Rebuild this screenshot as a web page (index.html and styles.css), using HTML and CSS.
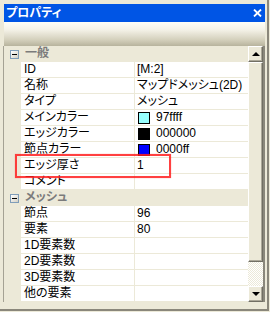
FILE: index.html
```html
<!DOCTYPE html>
<html lang="ja">
<head>
    <meta charset="UTF-8">
    <title>プロパティ</title>
    <link rel="stylesheet" href="styles.css">
</head>
<body>

    <div class="window">
        <div class="titlebar">
            <span class="title">プロパティ</span>
            <svg class="close" width="9" height="8" viewBox="0 0 9 8">
                <path d="M1 0.5 L8 7.5 M8 0.5 L1 7.5" stroke="#fff" stroke-width="1.8" fill="none"/>
            </svg>
        </div>
        <div class="toolbar"></div>

        <div class="panel">
            <div class="grid">
                <div class="row category"><span class="gutter"><span class="toggle"></span></span><span class="cat-label">一般</span></div>
                <div class="row"><span class="gutter"></span><span class="name">ID</span><span class="value">[M:2]</span></div>
                <div class="row"><span class="gutter"></span><span class="name">名称</span><span class="value">マップドメッシュ(2D)</span></div>
                <div class="row"><span class="gutter"></span><span class="name">タイプ</span><span class="value">メッシュ</span></div>
                <div class="row"><span class="gutter"></span><span class="name">メインカラー</span><span class="value"><span class="swatch cyan"></span>97ffff</span></div>
                <div class="row"><span class="gutter"></span><span class="name">エッジカラー</span><span class="value"><span class="swatch black"></span>000000</span></div>
                <div class="row"><span class="gutter"></span><span class="name">節点カラー</span><span class="value"><span class="swatch blue"></span>0000ff</span></div>
                <div class="row"><span class="gutter"></span><span class="name">エッジ厚さ</span><span class="value">1</span></div>
                <div class="row"><span class="gutter"></span><span class="name">コメント</span><span class="value"></span></div>
                <div class="row category"><span class="gutter"><span class="toggle"></span></span><span class="cat-label">メッシュ</span></div>
                <div class="row"><span class="gutter"></span><span class="name">節点</span><span class="value">96</span></div>
                <div class="row"><span class="gutter"></span><span class="name">要素</span><span class="value">80</span></div>
                <div class="row"><span class="gutter"></span><span class="name">1D要素数</span><span class="value"></span></div>
                <div class="row"><span class="gutter"></span><span class="name">2D要素数</span><span class="value"></span></div>
                <div class="row"><span class="gutter"></span><span class="name">3D要素数</span><span class="value"></span></div>
                <div class="row"><span class="gutter"></span><span class="name">他の要素</span><span class="value"></span></div>
            </div>

            <div class="scrollbar">
                <div class="sb-btn"><span class="arrow-up"></span></div>
                <div class="sb-thumb"></div>
                <div class="sb-track"></div>
                <div class="sb-btn"><span class="arrow-down"></span></div>
            </div>
        </div>
    </div>

    <div class="callout"></div>

</body>
</html>
```

FILE: styles.css
```css
body {
    margin: 0;
    width: 270px;
    height: 312px;
    overflow: hidden;
    background-color: #ece9d8;
    font-family: "Liberation Sans", "Noto Sans CJK JP", sans-serif;
    font-size: 12px;
    font-feature-settings: "palt";
    color: #000;
}

.window {
    width: 269px;
    height: 311px;
    box-sizing: border-box;
    padding: 4px 2px 0 3px;
    border-right: 2px solid #8a877b;
    border-bottom: 2px solid #8a877b;
    display: flex;
    flex-direction: column;
}

.titlebar {
    height: 18px;
    margin-left: 1px;
    background-color: #0055e5;
    display: flex;
    align-items: center;
    justify-content: space-between;
    padding: 0 3px 0 2px;
}

.title {
    color: white;
    font-weight: bold;
    line-height: 18px;
}

.close {
    display: block;
}

.toolbar {
    height: 24px;
    margin-left: 1px;
    background: linear-gradient(#fefef8 0%, #f6f4ea 30%, #d3cfbb 75%, #b7b39d 100%);
}

.panel {
    height: 256px;
    display: flex;
    border-left: 1px solid #a5a294;
    border-right: 2px solid #8a877b;
}

.grid {
    width: 244px;
}

.row {
    height: 15px;
    border-bottom: 1px solid #ece9d8;
    display: flex;
    line-height: 15px;
    overflow: hidden;
    white-space: nowrap;
}

.gutter {
    width: 17px;
    flex: none;
    background-color: #ece9d8;
    position: relative;
}

.name {
    width: 110px;
    flex: none;
    padding-left: 3px;
    background: white;
    border-right: 1px solid #ece9d8;
}

.value {
    flex: 1;
    padding-left: 2px;
    background: white;
    display: flex;
    align-items: center;
}

.category {
    background-color: #ece9d8;
}

.cat-label {
    padding-left: 4px;
    font-weight: bold;
    color: #7b7b7b;
}

.toggle {
    position: absolute;
    left: 6px;
    top: 4px;
    width: 9px;
    height: 9px;
    box-sizing: border-box;
    border: 1px solid #7f9db9;
    background: linear-gradient(135deg, #ffffff, #d4d0c4);
}

.toggle::after {
    content: "";
    position: absolute;
    left: 1px;
    top: 3px;
    width: 5px;
    height: 1px;
    background: #000;
}

.swatch {
    width: 12px;
    height: 12px;
    box-sizing: border-box;
    border: 1px solid #000;
    margin: 0 6px 0 1px;
}

.cyan { background: #97ffff; }
.black { background: #000000; }
.blue { background: #0000ff; }

.scrollbar {
    width: 15px;
    display: flex;
    flex-direction: column;
}

.sb-btn, .sb-thumb {
    box-sizing: border-box;
    background-color: #ece9d8;
    border: 1px solid;
    border-color: #ffffff #716f64 #716f64 #ffffff;
    box-shadow: inset -1px -1px 0 #aca899;
}

.sb-btn {
    height: 16px;
    display: flex;
    align-items: center;
    justify-content: center;
}

.sb-thumb {
    height: 200px;
}

.sb-track {
    flex: 1;
    background: repeating-conic-gradient(#ffffff 0 25%, #ece9d8 0 50%) 0 0 / 2px 2px;
}

.arrow-up {
    width: 0;
    height: 0;
    border-left: 4px solid transparent;
    border-right: 4px solid transparent;
    border-bottom: 4px solid #000;
}

.arrow-down {
    width: 0;
    height: 0;
    border-left: 4px solid transparent;
    border-right: 4px solid transparent;
    border-top: 4px solid #000;
}

/* red annotation box over the エッジ厚さ row */
.callout {
    position: absolute;
    left: 15px;
    top: 154px;
    width: 156px;
    height: 24px;
    box-sizing: border-box;
    border: 2px solid rgba(255, 30, 30, 0.85);
    box-shadow: 0 0 1px rgba(255, 0, 0, 0.4);
}
```
